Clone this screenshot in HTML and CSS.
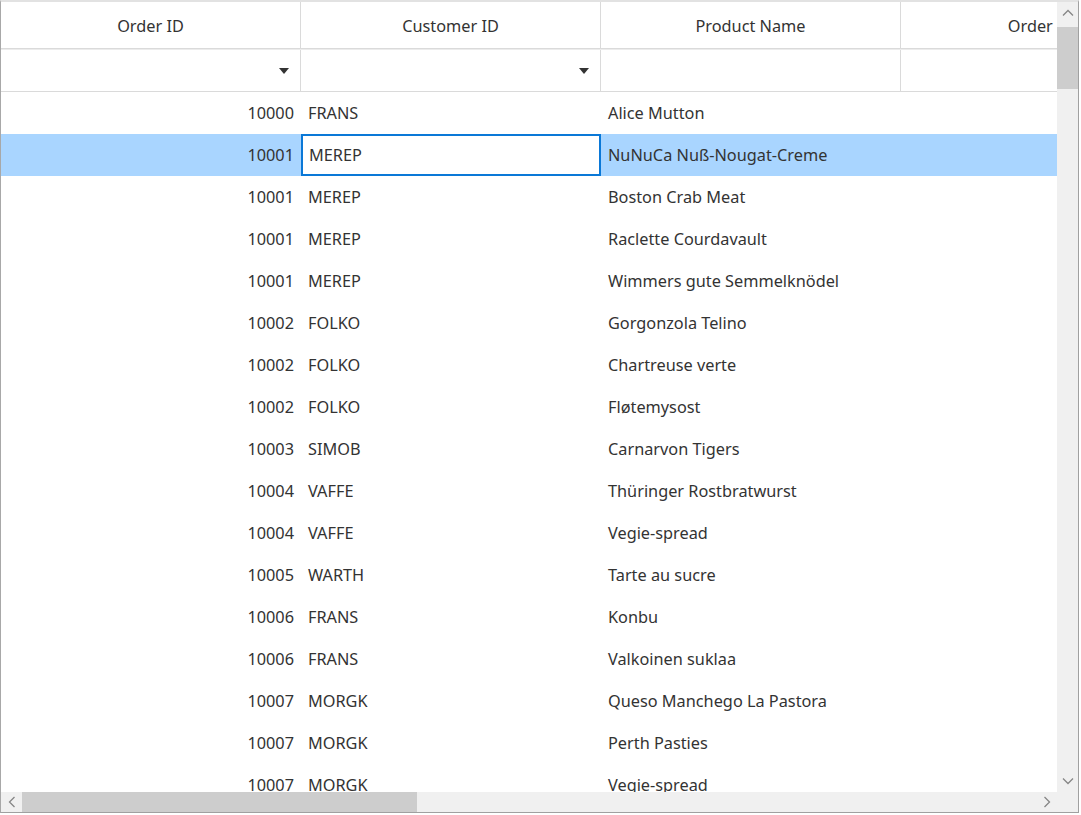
FILE: index.html
```html
<!DOCTYPE html>
<html>
<head>
<meta charset="utf-8">
<link rel="stylesheet" href="styles.css">
</head>
<body>
<div class="frame">
  <div class="viewport">
    <div class="table">
      <div class="row head">
        <div class="cell hcell">Order ID</div>
        <div class="cell hcell">Customer ID</div>
        <div class="cell hcell">Product Name</div>
        <div class="cell hcell">Order Date</div>
      </div>
      <div class="row filter">
        <div class="cell fcell"><span class="caret"></span></div>
        <div class="cell fcell"><span class="caret"></span></div>
        <div class="cell fcell"></div>
        <div class="cell fcell"></div>
      </div>
      <div class="body">
        <div class="row data"><div class="cell num">10000</div><div class="cell">FRANS</div><div class="cell">Alice Mutton</div><div class="cell"></div></div>
        <div class="row data selected"><div class="cell num">10001</div><div class="cell current">MEREP</div><div class="cell">NuNuCa Nuß-Nougat-Creme</div><div class="cell"></div></div>
        <div class="row data"><div class="cell num">10001</div><div class="cell">MEREP</div><div class="cell">Boston Crab Meat</div><div class="cell"></div></div>
        <div class="row data"><div class="cell num">10001</div><div class="cell">MEREP</div><div class="cell">Raclette Courdavault</div><div class="cell"></div></div>
        <div class="row data"><div class="cell num">10001</div><div class="cell">MEREP</div><div class="cell">Wimmers gute Semmelknödel</div><div class="cell"></div></div>
        <div class="row data"><div class="cell num">10002</div><div class="cell">FOLKO</div><div class="cell">Gorgonzola Telino</div><div class="cell"></div></div>
        <div class="row data"><div class="cell num">10002</div><div class="cell">FOLKO</div><div class="cell">Chartreuse verte</div><div class="cell"></div></div>
        <div class="row data"><div class="cell num">10002</div><div class="cell">FOLKO</div><div class="cell">Fløtemysost</div><div class="cell"></div></div>
        <div class="row data"><div class="cell num">10003</div><div class="cell">SIMOB</div><div class="cell">Carnarvon Tigers</div><div class="cell"></div></div>
        <div class="row data"><div class="cell num">10004</div><div class="cell">VAFFE</div><div class="cell">Thüringer Rostbratwurst</div><div class="cell"></div></div>
        <div class="row data"><div class="cell num">10004</div><div class="cell">VAFFE</div><div class="cell">Vegie-spread</div><div class="cell"></div></div>
        <div class="row data"><div class="cell num">10005</div><div class="cell">WARTH</div><div class="cell">Tarte au sucre</div><div class="cell"></div></div>
        <div class="row data"><div class="cell num">10006</div><div class="cell">FRANS</div><div class="cell">Konbu</div><div class="cell"></div></div>
        <div class="row data"><div class="cell num">10006</div><div class="cell">FRANS</div><div class="cell">Valkoinen suklaa</div><div class="cell"></div></div>
        <div class="row data"><div class="cell num">10007</div><div class="cell">MORGK</div><div class="cell">Queso Manchego La Pastora</div><div class="cell"></div></div>
        <div class="row data"><div class="cell num">10007</div><div class="cell">MORGK</div><div class="cell">Perth Pasties</div><div class="cell"></div></div>
        <div class="row data"><div class="cell num">10007</div><div class="cell">MORGK</div><div class="cell">Vegie-spread</div><div class="cell"></div></div>
      </div>
    </div>
  </div>
  <div class="vscroll">
    <div class="arrow"><svg width="12" height="8" viewBox="0 0 12 8"><polyline points="1,6.5 6,1.5 11,6.5" fill="none" stroke="#868686" stroke-width="1.3"/></svg></div>
    <div class="vtrack"><div class="vthumb"></div></div>
    <div class="arrow"><svg width="12" height="8" viewBox="0 0 12 8"><polyline points="1,1.5 6,6.5 11,1.5" fill="none" stroke="#868686" stroke-width="1.3"/></svg></div>
  </div>
  <div class="hscroll">
    <div class="harrow"><svg width="8" height="12" viewBox="0 0 8 12"><polyline points="6.5,1 1.5,6 6.5,11" fill="none" stroke="#868686" stroke-width="1.3"/></svg></div>
    <div class="htrack"><div class="hthumb"></div></div>
    <div class="harrow"><svg width="8" height="12" viewBox="0 0 8 12"><polyline points="1.5,1 6.5,6 1.5,11" fill="none" stroke="#868686" stroke-width="1.3"/></svg></div>
  </div>
  <div class="corner"></div>
</div>
</body>
</html>
```
FILE: styles.css
```css
html, body {
  margin: 0;
  padding: 0;
  background: #ffffff;
}
body {
  font-family: "Noto Sans", "Open Sans", sans-serif;
  font-size: 16.3px;
  color: #333333;
}
.frame {
  width: 1077px;
  height: 810px;
  border-top: 2px solid #e2e2e2;
  border-left: 1px solid #a8a8a8;
  border-right: 1px solid #a0a0a0;
  border-bottom: 1px solid #a0a0a0;
  display: grid;
  grid-template-columns: 1056px 21px;
  grid-template-rows: 790px 20px;
  overflow: hidden;
}
.viewport {
  overflow: hidden;
  background: #fff;
}
.table {
  width: 1200px;
}
.row {
  display: flex;
}
.cell {
  width: 300px;
  flex: none;
  box-sizing: border-box;
  display: flex;
  align-items: center;
  padding: 0 7px;
  white-space: nowrap;
}
.head {
  height: 47px;
  border-bottom: 1px solid #dadada;
  box-sizing: border-box;
}
.hcell {
  justify-content: center;
  border-right: 1px solid #dadada;
  padding-top: 1px;
}
.filter {
  height: 43px;
  border-bottom: 1px solid #dadada;
  box-sizing: border-box;
  border-top: 1px solid #ececec;
}
.fcell {
  justify-content: flex-end;
  border-right: 1px solid #dadada;
  padding-right: 11px;
}
.caret {
  width: 0;
  height: 0;
  border-left: 5.5px solid transparent;
  border-right: 5.5px solid transparent;
  border-top: 6px solid #333;
}
.data {
  height: 42px;
}
.num {
  justify-content: flex-end;
  padding-right: 7px;
}
.selected {
  background: #a9d5ff;
}
.current {
  background: #ffffff;
  border: 2px solid #0a78d7;
  padding-left: 6px;
}
.vscroll {
  background: #f0f0f0;
  display: flex;
  flex-direction: column;
}
.arrow {
  height: 22px;
  display: flex;
  align-items: center;
  justify-content: center;
  flex: none;
}
.vtrack {
  flex: 1;
}
.vthumb {
  height: 62px;
  background: #cdcdcd;
  margin-top: 3px;
}
.hscroll {
  background: #f0f0f0;
  display: flex;
}
.harrow {
  width: 21px;
  display: flex;
  align-items: center;
  justify-content: center;
  flex: none;
}
.htrack {
  flex: 1;
}
.hthumb {
  width: 395px;
  height: 100%;
  background: #cdcdcd;
}
.corner {
  background: #f0f0f0;
}
```
